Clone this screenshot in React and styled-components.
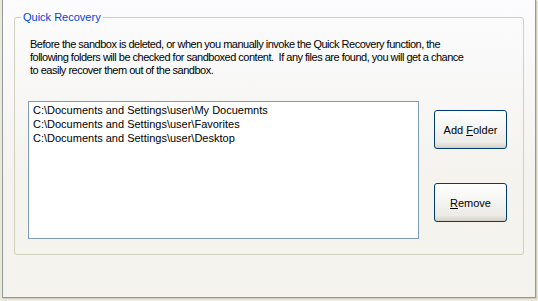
import React from 'react'
import styled, { createGlobalStyle } from 'styled-components'

const GlobalStyle = createGlobalStyle`
    html, body {
        margin: 0;
        padding: 0;
        background: #ECE9D8;
    }
    body {
        font-family: "Liberation Sans", Arial, sans-serif;
        font-size: 11px;
        color: #000;
    }
`

const folders = [
    'C:\\Documents and Settings\\user\\My Docuemnts',
    'C:\\Documents and Settings\\user\\Favorites',
    'C:\\Documents and Settings\\user\\Desktop',
]

const Mnemonic = ({ text, index }) => (
    <>
        {text.slice(0, index)}
        <u>{text[index]}</u>
        {text.slice(index + 1)}
    </>
)

export default function App() {
    return (
        <>
            <GlobalStyle />
            <Page>
                <TabPanel>
                    <GroupBox>
                        <GroupTitle>Quick Recovery</GroupTitle>
                        <Intro>
                            <Line>Before the sandbox is deleted, or when you manually invoke the Quick Recovery function, the</Line>
                            <Line>following folders will be checked for sandboxed content.&nbsp; If any files are found, you will get a chance</Line>
                            <Line>to easily recover them out of the sandbox.</Line>
                        </Intro>
                        <ContentRow>
                            <ListBox>
                                {folders.map(f => <ListItem key={f}>{f}</ListItem>)}
                            </ListBox>
                            <ButtonColumn>
                                <Button><Mnemonic text='Add Folder' index={4} /></Button>
                                <Button><Mnemonic text='Remove' index={0} /></Button>
                            </ButtonColumn>
                        </ContentRow>
                    </GroupBox>
                </TabPanel>
            </Page>
        </>
    )
}

const Page = styled.div`
    width: 538px;
    height: 301px;
    padding: 0 2px 0 2px;
    box-sizing: border-box;
`

const TabPanel = styled.div`
    height: 298px;
    box-sizing: border-box;
    border: 1px solid #919B9C;
    border-top: none;
    background: linear-gradient(#FCFCFE, #F4F3EE 60%, #F4F3EE);
    box-shadow: 1px 1px 0 #D0CDBE;
    padding: 17px 11px 0 11px;
`

const GroupBox = styled.div`
    position: relative;
    height: 238px;
    box-sizing: border-box;
    border: 1px solid #D0D0BF;
    border-radius: 3px;
    padding: 20px 15px 0 0;
`

const GroupTitle = styled.span`
    position: absolute;
    top: -8px;
    left: 6px;
    padding: 0 2px;
    line-height: 14px;
    color: #0046D5;
    background: #FBFBFC;
`

const Intro = styled.div`
    margin: 0 0 0 15px;
    line-height: 13px;
    letter-spacing: -0.5px;
`

const Line = styled.div`
    white-space: nowrap;
`

const ContentRow = styled.div`
    display: flex;
    align-items: flex-start;
    margin: 24px 0 0 13px;
`

const ListBox = styled.div`
    width: 391px;
    height: 138px;
    box-sizing: border-box;
    border: 1px solid #7F9DB9;
    background: #FFFFFF;
    padding: 1px 0 0 4px;
`

const ListItem = styled.div`
    line-height: 14px;
    white-space: nowrap;
`

const ButtonColumn = styled.div`
    display: flex;
    flex-direction: column;
    gap: 34px;
    margin: 9px 0 0 15px;
`

const Button = styled.button`
    width: 73px;
    height: 39px;
    box-sizing: border-box;
    border: 1px solid #003C74;
    border-radius: 3px;
    background: linear-gradient(#FFFFFF, #F6F6F3 40%, #ECEBE6 85%, #D6D0C5);
    font-family: "Liberation Sans", Arial, sans-serif;
    font-size: 11px;
    color: #000;
    padding: 0;
    cursor: pointer;
`
